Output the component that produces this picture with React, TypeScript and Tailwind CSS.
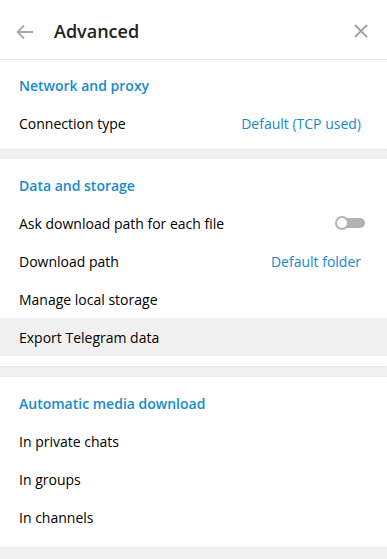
import { ReactNode } from "react";

const font = { fontFamily: '"Open Sans", "Noto Sans", sans-serif' };

function SectionTitle({ children }: { children: ReactNode }) {
  return (
    <div className="h-[38px] flex items-center px-[19px] text-[14px] font-semibold text-[#168acd]">
      {children}
    </div>
  );
}

function Row({
  label,
  value,
  right,
  active,
}: {
  label: string;
  value?: string;
  right?: ReactNode;
  active?: boolean;
}) {
  return (
    <div
      className={
        "h-[38px] flex items-center justify-between pl-[19px] pr-[26px] text-[14px] text-[#000]" +
        (active ? " bg-[#f0f0f0]" : "")
      }
    >
      <span>{label}</span>
      {value && <span className="text-[#168acd]">{value}</span>}
      {right}
    </div>
  );
}

function Toggle() {
  return (
    <div className="relative w-[30px] h-[14px] -mr-[4px]">
      <div className="absolute left-[2px] right-0 top-[2px] h-[10px] rounded-full bg-[#b3b3b3]" />
      <div className="absolute left-0 top-0 size-[14px] rounded-full bg-white border-2 border-[#b3b3b3]" />
    </div>
  );
}

export default function App() {
  return (
    <div className="w-[387px] h-[559px] bg-[#f1f1f1] overflow-hidden" style={font}>
      {/* header */}
      <div className="h-[60px] bg-white border-b border-[#e8e8e8] flex items-center pt-[4px] pl-[16px] pr-[19px]">
        <svg width="18" height="16" viewBox="0 0 18 16">
          <path
            d="M17 8H2M8 1.5L1.5 8L8 14.5"
            fill="none"
            stroke="#a8a8a8"
            strokeWidth="1.8"
          />
        </svg>
        <h1 className="ml-[20px] text-[18px] font-semibold text-[#222] flex-1">Advanced</h1>
        <svg width="14" height="14" viewBox="0 0 14 14" className="-mt-[2px]">
          <path d="M1 1L13 13M13 1L1 13" stroke="#a0a0a0" strokeWidth="1.8" />
        </svg>
      </div>

      <div className="bg-white pt-[6px] pb-[7px] shadow-[0_1px_2px_rgba(0,0,0,0.06)]">
        <SectionTitle>Network and proxy</SectionTitle>
        <Row label="Connection type" value="Default (TCP used)" />
      </div>

      <div className="mt-[10px] bg-white pt-[7px] pb-[10px] shadow-[0_1px_2px_rgba(0,0,0,0.06)]">
        <SectionTitle>Data and storage</SectionTitle>
        <Row label="Ask download path for each file" right={<Toggle />} />
        <Row label="Download path" value="Default folder" />
        <Row label="Manage local storage" />
        <Row label="Export Telegram data" active />
      </div>

      <div className="mt-[11px] bg-white pt-[7px] pb-[11px] shadow-[0_1px_2px_rgba(0,0,0,0.06)]">
        <SectionTitle>Automatic media download</SectionTitle>
        <Row label="In private chats" />
        <Row label="In groups" />
        <Row label="In channels" />
      </div>
    </div>
  );
}
